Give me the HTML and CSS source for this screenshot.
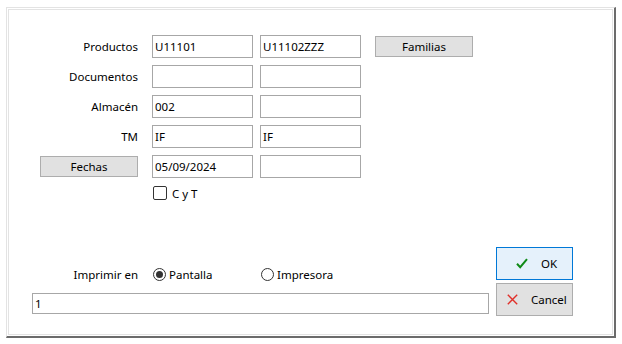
FILE: index.html
```html
<!DOCTYPE html>
<html lang="es">
<head>
<meta charset="utf-8">
<title>Listado</title>
<link rel="stylesheet" href="styles.css">
</head>
<body>
<div class="frame">
  <div class="inner">
    <div class="form">
      <div class="row">
        <span class="label">Productos</span>
        <div class="field">U11101</div>
        <div class="field gap">U11102ZZZ</div>
        <button class="btn familias" type="button">Familias</button>
      </div>
      <div class="row">
        <span class="label">Documentos</span>
        <div class="field"></div>
        <div class="field gap"></div>
      </div>
      <div class="row">
        <span class="label">Almacén</span>
        <div class="field">002</div>
        <div class="field gap"></div>
      </div>
      <div class="row">
        <span class="label">TM</span>
        <div class="field">IF</div>
        <div class="field gap">IF</div>
      </div>
      <div class="row">
        <button class="btn fechas" type="button">Fechas</button>
        <div class="field">05/09/2024</div>
        <div class="field gap"></div>
      </div>
      <div class="checkrow">
        <span class="check"></span>
        <span class="checktext">C y T</span>
      </div>
    </div>
    <div class="bottom">
      <div class="leftcol">
        <div class="radiorow">
          <span class="rlabel">Imprimir en</span>
          <span class="radiogroup first"><span class="radio on"></span><span>Pantalla</span></span>
          <span class="radiogroup"><span class="radio"></span><span>Impresora</span></span>
        </div>
        <div class="longfield">1</div>
      </div>
      <div class="buttons">
        <button class="dlg ok" type="button">
          <svg class="ico" width="12" height="11" viewBox="0 0 12 11"><path d="M1 5.8 L4.2 9.2 L11 1.2" fill="none" stroke="#0f8a16" stroke-width="2"/></svg>
          <span class="oktext">OK</span>
        </button>
        <button class="dlg cancel" type="button">
          <svg class="ico" width="11" height="11" viewBox="0 0 11 11"><path d="M0.8 0.8 L10.2 10.2 M10.2 0.8 L0.8 10.2" fill="none" stroke="#e0302a" stroke-width="1.4"/></svg>
          <span class="canceltext">Cancel</span>
        </button>
      </div>
    </div>
  </div>
</div>
</body>
</html>
```
FILE: styles.css
```css
html, body {
  margin: 0;
  padding: 0;
  background: #ffffff;
}
body {
  font-family: "Noto Sans", "Open Sans", sans-serif;
  font-size: 11.5px;
  color: #000000;
  width: 622px;
  height: 344px;
  overflow: hidden;
}
.frame {
  margin: 7px 0 0 6px;
  width: 610px;
  height: 331px;
  box-sizing: border-box;
  border-style: solid;
  border-width: 1px 2px 2px 1px;
  border-color: #e3e3e3 #6b6b6b #6b6b6b #e3e3e3;
  padding: 1px;
}
.inner {
  height: 100%;
  box-sizing: border-box;
  border: 1px solid #e3e3e3;
  display: flex;
  flex-direction: column;
}
.form {
  padding: 25px 0 0 31px;
  display: flex;
  flex-direction: column;
  gap: 7px;
}
.row {
  display: flex;
  align-items: center;
  height: 23px;
}
.label {
  width: 98px;
  text-align: right;
}
.field {
  width: 101px;
  height: 23px;
  box-sizing: border-box;
  border: 1px solid #a7a7a7;
  margin-left: 14px;
  padding: 0 2px;
  line-height: 21px;
  white-space: nowrap;
}
.field.gap {
  margin-left: 7px;
}
.btn {
  font: inherit;
  color: #000;
  background: #e1e1e1;
  border: 1px solid #adadad;
  height: 21px;
  padding: 0;
  box-sizing: border-box;
}
.familias {
  width: 98px;
  margin-left: 14px;
  align-self: flex-start;
  margin-top: 1px;
}
.fechas {
  width: 98px;
  height: 21px;
}
.checkrow {
  display: flex;
  align-items: center;
  margin-left: 113px;
  margin-top: 1px;
  height: 14px;
}
.check {
  width: 14px;
  height: 14px;
  box-sizing: border-box;
  border: 1px solid #333333;
  border-radius: 2px;
}
.checktext {
  margin-left: 5px;
}
.bottom {
  display: flex;
  align-items: flex-end;
  margin-top: auto;
  padding: 0 0 18px 23px;
}
.leftcol {
  width: 457px;
  margin-bottom: 2px;
}
.radiorow {
  display: flex;
  align-items: center;
  height: 20px;
}
.rlabel {
  width: 106px;
  text-align: right;
}
.radiogroup {
  display: flex;
  align-items: center;
  gap: 3px;
}
.radiogroup.first {
  margin-left: 15px;
  width: 108px;
}
.radio {
  width: 13px;
  height: 13px;
  box-sizing: border-box;
  border: 1px solid #333333;
  border-radius: 50%;
  display: flex;
  align-items: center;
  justify-content: center;
}
.radio.on::after {
  content: "";
  width: 7px;
  height: 7px;
  border-radius: 50%;
  background: #333333;
}
.longfield {
  margin-top: 9px;
  height: 21px;
  box-sizing: border-box;
  border: 1px solid #a7a7a7;
  padding: 0 2px;
  line-height: 19px;
}
.buttons {
  margin-left: 7px;
  display: flex;
  flex-direction: column;
  gap: 3px;
}
.dlg {
  font: inherit;
  color: #000;
  width: 77px;
  height: 33px;
  box-sizing: border-box;
  padding: 0;
  display: flex;
  align-items: center;
}
.ok {
  background: #e5f1fb;
  border: 1px solid #0078d7;
  padding-left: 19px;
}
.oktext {
  margin-left: 13px;
}
.cancel {
  background: #e1e1e1;
  border: 1px solid #adadad;
  padding-left: 10px;
}
.canceltext {
  margin-left: 13px;
}
.ico {
  display: block;
  flex: none;
}
```
